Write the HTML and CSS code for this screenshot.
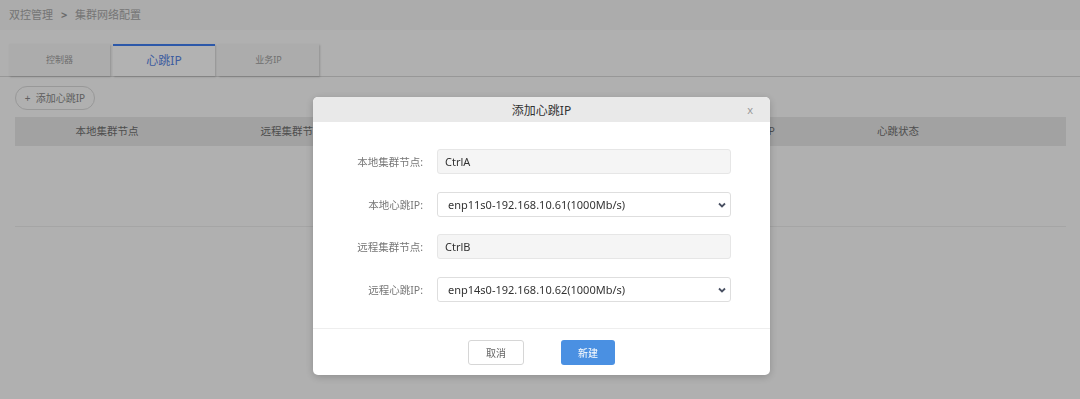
FILE: index.html
```html
<!DOCTYPE html>
<html lang="zh-CN">
<head>
  <meta charset="UTF-8">
  <title>集群网络配置</title>
  <link rel="stylesheet" href="styles.css">
</head>
<body>
  <div class="breadcrumb">
    <span>双控管理</span>
    <span class="crumb-sep">&gt;</span>
    <span>集群网络配置</span>
  </div>

  <div class="main">
    <div class="tabs">
      <div class="tab">控制器</div>
      <div class="tab active">心跳IP</div>
      <div class="tab">业务IP</div>
    </div>

    <div class="content">
      <button class="add-button">+&nbsp; 添加心跳IP</button>

      <div class="table">
        <div class="table-head">
          <div>本地集群节点</div>
          <div>远程集群节点</div>
          <div>本地心跳IP</div>
          <div>远程心跳IP</div>
          <div>心跳状态</div>
          <div></div>
        </div>
        <div class="table-body"></div>
      </div>
    </div>
  </div>

  <!-- 弹窗 -->
  <div class="mask">
    <div class="modal">
      <div class="modal-header">
        <span class="modal-title">添加心跳IP</span>
        <span class="modal-close">x</span>
      </div>
      <div class="modal-body">
        <label class="form-label">本地集群节点:</label>
        <input class="form-input" type="text" value="CtrlA" disabled>

        <label class="form-label">本地心跳IP:</label>
        <div class="select-wrap">
          <select class="form-select">
            <option>enp11s0-192.168.10.61(1000Mb/s)</option>
          </select>
          <svg class="select-arrow" width="8" height="6" viewBox="0 0 8 6"><path d="M1 1.5 L4 4.5 L7 1.5" fill="none" stroke="#4a5163" stroke-width="1.8"/></svg>
        </div>

        <label class="form-label">远程集群节点:</label>
        <input class="form-input" type="text" value="CtrlB" disabled>

        <label class="form-label">远程心跳IP:</label>
        <div class="select-wrap">
          <select class="form-select">
            <option>enp14s0-192.168.10.62(1000Mb/s)</option>
          </select>
          <svg class="select-arrow" width="8" height="6" viewBox="0 0 8 6"><path d="M1 1.5 L4 4.5 L7 1.5" fill="none" stroke="#4a5163" stroke-width="1.8"/></svg>
        </div>
      </div>
      <div class="modal-footer">
        <button class="btn-cancel">取消</button>
        <button class="btn-primary">新建</button>
      </div>
    </div>
  </div>
</body>
</html>
```

FILE: styles.css
```css
body {
  margin: 0;
  font-family: 'Noto Sans', 'Noto Sans CJK SC', sans-serif;
  background: #fcfcfc;
  width: 1080px;
  height: 399px;
  overflow: hidden;
}

.breadcrumb {
  height: 30px;
  line-height: 30px;
  padding-left: 9px;
  background: #f6f6f6;
  font-size: 11px;
  color: #a8a8a8;
}

.crumb-sep {
  font-weight: bold;
  margin: 0 5px;
  color: #999;
}

.main {
  padding-top: 14px;
}

.tabs {
  display: flex;
  gap: 3px;
  padding-left: 9px;
  border-bottom: 1px solid #d8d8d8;
  height: 32px;
}

.tab {
  width: 101px;
  height: 32px;
  line-height: 32px;
  text-align: center;
  font-size: 9px;
  color: #a0a0a0;
  background: #f7f7f7;
  box-shadow: 1px 1px 2px rgba(0,0,0,0.18);
  box-sizing: border-box;
}

.tab.active {
  width: 102px;
  background: #fff;
  border-top: 2px solid #3f7ef2;
  line-height: 29px;
  font-size: 12px;
  color: #5a86e6;
}

.content {
  padding: 8px 14px 0 15px;
}

.add-button {
  height: 24px;
  width: 80px;
  padding: 0;
  border: 1px solid #dadada;
  border-radius: 12px;
  background: #fcfcfc;
  font-family: inherit;
  font-size: 10px;
  color: #888;
}

.table {
  margin-top: 7px;
}

.table-head {
  display: grid;
  grid-template-columns: 184px 186px 270px 188px 110px 1fr;
  height: 29px;
  line-height: 29px;
  background: #e9e9e9;
  font-size: 10.5px;
  color: #707070;
  text-align: center;
}

.table-body {
  height: 80px;
  border-bottom: 1px solid #ececec;
}

.mask {
  position: fixed;
  inset: 0;
  background: rgba(0,0,0,0.3);
  display: flex;
  justify-content: center;
  align-items: flex-start;
  padding: 97px 0 0 3px;
}

.modal {
  width: 457px;
  background: #fff;
  border-radius: 5px;
  overflow: hidden;
  box-shadow: 0 2px 8px rgba(0,0,0,0.2);
}

.modal-header {
  height: 25px;
  line-height: 25px;
  background: #e9e9e9;
  text-align: center;
  position: relative;
}

.modal-title {
  font-size: 12px;
  color: #333;
}

.modal-close {
  position: absolute;
  right: 17px;
  top: 0;
  font-size: 11px;
  color: #999;
}

.modal-body {
  display: grid;
  grid-template-columns: 110px 294px;
  column-gap: 14px;
  row-gap: 17.5px;
  padding: 27px 0 26px;
  align-items: center;
}

.form-label {
  text-align: right;
  font-size: 10.5px;
  color: #777;
}

.form-input,
.form-select {
  width: 294px;
  height: 25px;
  box-sizing: border-box;
  border-radius: 3px;
  font-family: inherit;
  font-size: 11px;
  color: #333;
  margin: 0;
}

.form-input {
  background: #f5f5f5;
  border: 1px solid #e6e6e6;
  padding: 0 7px;
}

.select-wrap {
  position: relative;
  height: 25px;
}

.form-select {
  appearance: none;
  -webkit-appearance: none;
  background: #fff;
  border: 1px solid #dedede;
  padding: 0 10px;
}

.select-arrow {
  position: absolute;
  right: 5px;
  top: 10px;
}

.modal-footer {
  border-top: 1px solid #eee;
  padding: 11px 0 10px;
  display: flex;
  justify-content: center;
  gap: 37px;
}

.btn-cancel,
.btn-primary {
  height: 25px;
  border-radius: 3px;
  font-family: inherit;
  font-size: 10px;
  padding: 0;
}

.btn-cancel {
  width: 56px;
  background: #fff;
  border: 1px solid #d6d6d6;
  color: #666;
}

.btn-primary {
  width: 54px;
  background: #4a90e2;
  border: none;
  color: #fff;
}
```
